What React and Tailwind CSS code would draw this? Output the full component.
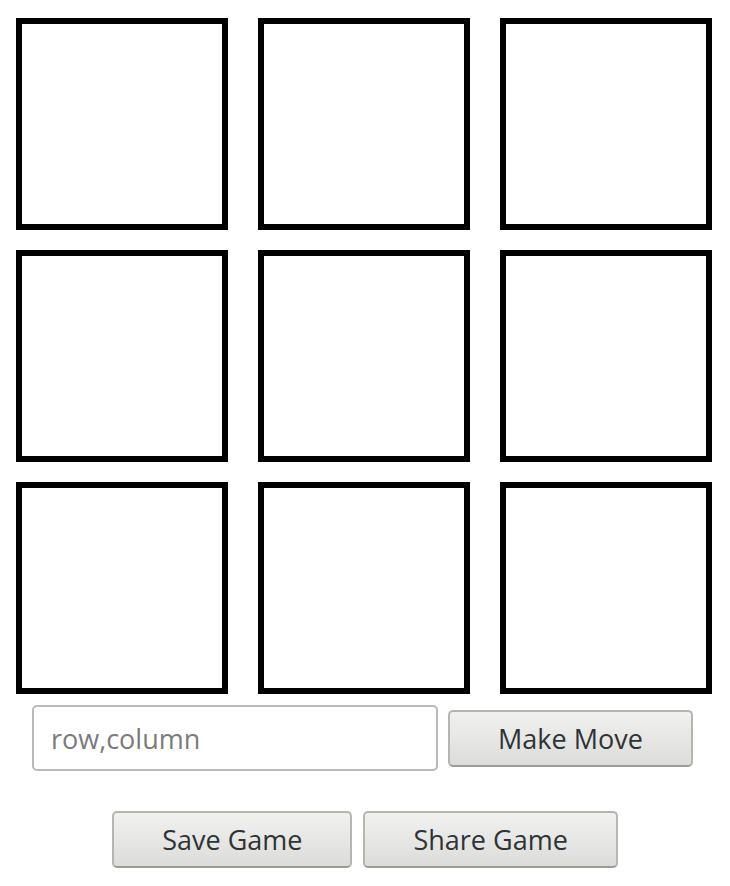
import { useState } from 'react';

function Cell() {
  return <div className="w-[212px] h-[212px] border-[6px] border-black bg-white" />;
}

function GtkButton({ children, onClick }) {
  return (
    <button
      type="button"
      onClick={onClick}
      className="h-[57px] px-[48px] rounded-[5px] border-2 border-[#b6b6b1] border-b-[#9c9c97] bg-gradient-to-b from-[#f1f1f0] to-[#dcdcda] text-[27px] leading-none text-[#2e3436]"
    >
      {children}
    </button>
  );
}

export default function App() {
  const [move, setMove] = useState('');

  return (
    <div className="w-[730px] h-[886px] bg-white font-['Open_Sans',sans-serif]">
      <div className="pt-[18px] pl-[16px] grid grid-cols-[212px_212px_212px] gap-x-[30px] gap-y-[20px]">
        {Array.from({ length: 9 }).map((_, i) => (
          <Cell key={i} />
        ))}
      </div>
      <div className="mt-[11px] pl-[32px] flex items-center gap-[10px]">
        <input
          value={move}
          onChange={(e) => setMove(e.target.value)}
          placeholder="row,column"
          className="w-[406px] h-[66px] px-[17px] rounded-[5px] border-2 border-[#b9b9b5] bg-white text-[27px] text-[#2e3436] placeholder:text-[#7b7b7b] outline-none"
        />
        <GtkButton>Make Move</GtkButton>
      </div>
      <div className="mt-[40px] flex justify-center gap-[11px]">
        <GtkButton>Save Game</GtkButton>
        <GtkButton>Share Game</GtkButton>
      </div>
    </div>
  );
}
